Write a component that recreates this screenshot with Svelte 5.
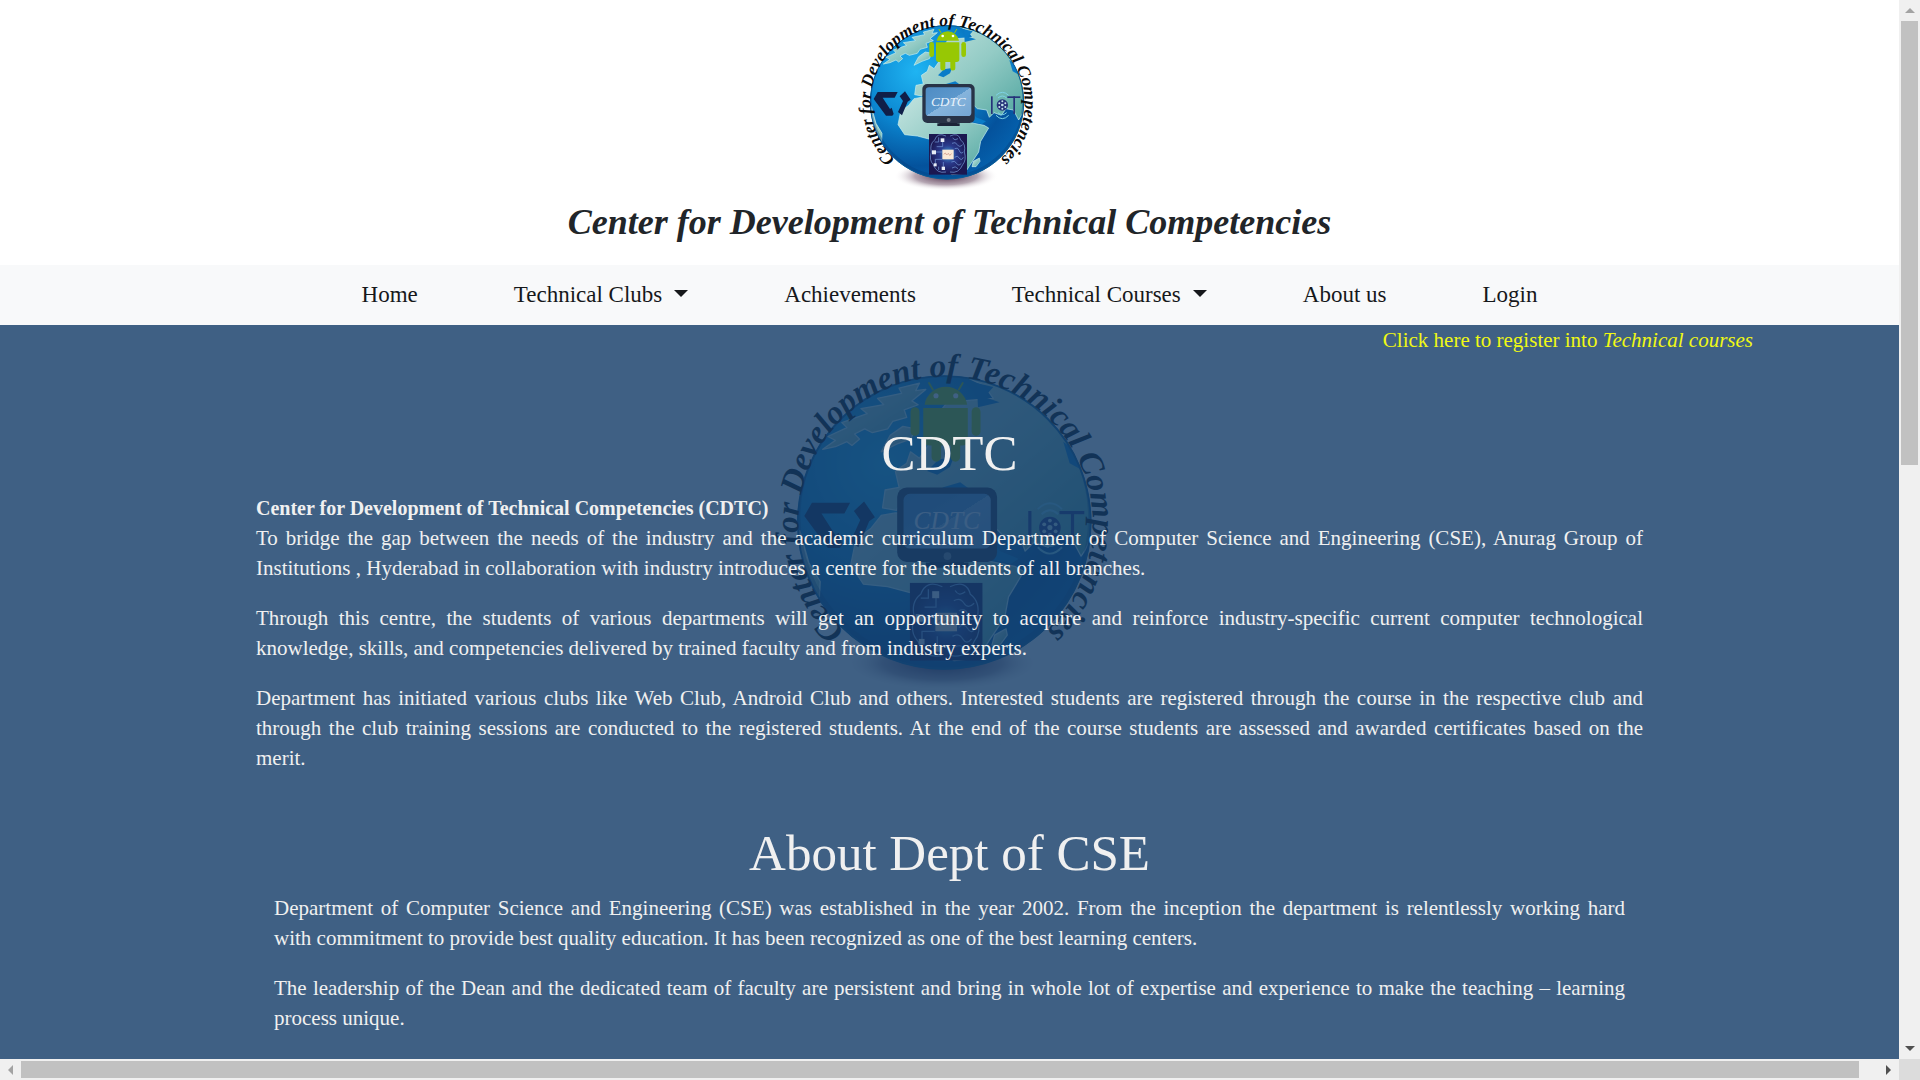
<script>
  const navItems = [
    { label: 'Home' },
    { label: 'Technical Clubs', menu: true },
    { label: 'Achievements' },
    { label: 'Technical Courses', menu: true },
    { label: 'About us' },
    { label: 'Login' }
  ];
</script>

{#snippet emblem(id)}
  <svg class="emblem" viewBox="0 0 660 600" role="img" aria-label="Center for Development of Technical Competencies emblem">
    <defs>
      <radialGradient id="{id}-sea" cx="0.3" cy="0.3" r="0.85">
        <stop offset="0" stop-color="#1fb4f2" />
        <stop offset="0.4" stop-color="#0b86d0" />
        <stop offset="0.72" stop-color="#04529c" />
        <stop offset="1" stop-color="#0567b4" />
      </radialGradient>
      <linearGradient id="{id}-land" x1="0" y1="0" x2="1" y2="1">
        <stop offset="0" stop-color="#c4e4e0" />
        <stop offset="0.5" stop-color="#93cbc5" />
        <stop offset="1" stop-color="#4fa59f" />
      </linearGradient>
      <radialGradient id="{id}-shadow">
        <stop offset="0" stop-color="#3a1030" stop-opacity="0.9" />
        <stop offset="0.6" stop-color="#5a3a55" stop-opacity="0.45" />
        <stop offset="1" stop-color="#ffffff" stop-opacity="0" />
      </radialGradient>
      <linearGradient id="{id}-screen" x1="0" y1="0" x2="1" y2="1">
        <stop offset="0" stop-color="#4f8cc4" />
        <stop offset="0.5" stop-color="#5c98cc" />
        <stop offset="0.5" stop-color="#86b4dc" />
        <stop offset="1" stop-color="#74a6d3" />
      </linearGradient>
      <radialGradient id="{id}-chip">
        <stop offset="0" stop-color="#3ca0d8" />
        <stop offset="0.45" stop-color="#2a3a8c" />
        <stop offset="1" stop-color="#1b1750" />
      </radialGradient>
      <clipPath id="{id}-globe"><circle cx="321" cy="307" r="230" /></clipPath>
      <path id="{id}-ring" d="M207.5 509 A231 231 0 1 1 438.5 509" />
    </defs>
    <ellipse cx="318" cy="528" rx="156" ry="44" fill="url(#{id}-shadow)" />
    <circle cx="321" cy="307" r="231" fill="url(#{id}-sea)" />
    <g clip-path="url(#{id}-globe)">
      <g fill="url(#{id}-land)" stroke="#c9f0f2" stroke-width="2" stroke-linejoin="round">
        <path d="M130 192 L150 178 L138 172 L168 158 L160 150 L200 136 L190 128 L226 122 L216 112 L254 104 L250 96 L282 88 L276 100 L292 98 L270 116 L280 122 L258 130 L262 142 L240 148 L232 160 L208 166 L196 160 L180 168 L188 176 L176 186 L168 180 L150 188 Z" />
        <path d="M222 196 L236 170 L256 156 L276 160 L268 176 L246 184 Z" />
        <path d="M350 76 Q478 84 550 240 Q562 330 536 360 L520 330 L498 326 L484 346 L462 338 L448 352 L440 330 L412 326 L404 318 L378 312 L360 286 L340 292 L318 284 L300 290 L280 262 L254 270 L246 288 L224 284 L228 256 L250 252 L244 226 L262 214 L268 196 L282 206 L296 186 L306 160 L300 150 L326 118 L398 112 L384 92 Z" />
        <path d="M244 292 L290 294 L318 306 L356 310 L382 322 L392 368 L432 376 L446 384 L422 424 L416 456 L392 492 L374 520 L336 524 L306 502 L290 462 L278 420 L232 408 L194 404 L174 374 L182 334 L206 316 L222 296 Z" />
        <path d="M396 500 L400 484 L418 474 L420 484 L408 500 Z" />
        <path d="M94 320 L108 370 L126 400 L124 440 L140 470 L110 420 L92 360 Z" />
      </g>
      <g fill="#0a7cc8">
        <path d="M294 226 L312 208 L336 204 L330 220 L310 232 Z" />
        <path d="M372 88 L398 94 L384 110 L408 118 L374 126 Z" />
        <path d="M318 252 L346 244 L360 254 L328 262 Z" />
        <path d="M394 330 L408 352 L438 364 L426 372 L400 366 Z" />
        <path d="M508 180 L528 196 L540 226 L518 214 Z" />
      </g>
      <circle cx="321" cy="300" r="236" fill="none" stroke="#053b78" stroke-opacity="0.35" stroke-width="20" />
    </g>
    <circle cx="321" cy="307" r="230" fill="none" stroke="#0a5c96" stroke-width="3" />

    <g fill="#97c804">
      <path d="M290 122 A34 34 0 0 1 357 122 Z" />
      <path d="M303 98 L297 88 M344 98 L350 88" stroke="#97c804" stroke-width="3" stroke-linecap="round" />
      <path d="M288 127 H358 V178 Q358 186 350 186 H346 V204 A7 7 0 0 1 331 204 V186 H316 V204 A7 7 0 0 1 301 204 V186 H297 Q288 186 288 178 Z" />
      <rect x="268" y="126" width="14" height="45" rx="7" />
      <rect x="364" y="126" width="14" height="45" rx="7" />
    </g>
    <circle cx="308" cy="108" r="4" fill="#fff" />
    <circle cx="339" cy="108" r="4" fill="#fff" />

    <g fill="#101f48">
      <path d="M113 276 H173 L164 293 H128 L150 327 L155 323 L161 342 L157 347 H138 L101 297 Z" />
      <path d="M195 274 L212 299 L203 305 L186 346 L174 336 L189 303 L179 289 Z" />
    </g>

    <path d="M298 362 H352 V370 H359 V378 H292 V370 H298 Z" fill="#1b2438" />
    <rect x="247" y="252" width="157" height="117" rx="15" fill="#283347" />
    <rect x="257" y="262" width="137" height="86" rx="10" fill="url(#{id}-screen)" />
    <circle cx="326" cy="360" r="6" fill="#77808c" />
    <text class="screen-text" x="325" y="318" text-anchor="middle">CDTC</text>

    <g fill="none" stroke="#7ed3e6" stroke-width="3">
      <path d="M468 286 Q487 268 506 286" />
      <path d="M474 294 Q487 282 500 294" />
      <path d="M468 346 Q487 366 506 346" />
      <path d="M474 338 Q487 350 500 338" />
    </g>
    <g fill="#26337a">
      <rect x="453" y="289" width="5" height="53" />
      <rect x="502" y="289" width="39" height="5" />
      <rect x="520" y="289" width="5" height="53" />
      <circle cx="487" cy="315" r="17" />
    </g>
    <g fill="#c4e4ea">
      <circle cx="487" cy="315" r="4" />
      <circle cx="478" cy="310" r="3" /><circle cx="487" cy="304" r="3" /><circle cx="496" cy="310" r="3" />
      <circle cx="478" cy="321" r="3" /><circle cx="487" cy="326" r="3" /><circle cx="496" cy="321" r="3" />
    </g>

    <rect x="267" y="402" width="114" height="122" fill="url(#{id}-chip)" />
    <g fill="none" stroke="#7aa2e0" stroke-width="2">
      <path d="M318 408 Q292 396 284 420 Q268 432 274 456 Q266 480 280 494 Q290 522 318 516" />
      <path d="M330 408 Q356 396 362 420 Q378 432 373 456 Q380 480 368 494 Q356 522 330 516" />
      <path d="M338 414 Q344 424 354 416 M336 430 Q346 424 352 434 T368 434 M344 446 Q354 440 358 452 T370 456 M344 472 Q352 464 358 474 T370 472 M334 486 Q344 480 350 490 T364 490 M336 504 Q346 496 354 506" />
      <path d="M308 424 V440 H290 M284 456 H306 M286 494 V478 H306 M310 504 V486 M296 412 V426 H284 M296 510 V500" />
    </g>
    <g fill="#e8edf6">
      <rect x="302" y="415" width="11" height="11" />
      <rect x="276" y="451" width="12" height="12" />
      <rect x="281" y="490" width="9" height="9" />
      <rect x="305" y="500" width="10" height="10" />
      <rect x="307" y="449" width="34" height="29" fill="#fbe9d6" />
    </g>
    <path d="M311 463 l5 -4 l4 6 l5 -5 l4 6 l6 -5" fill="none" stroke="#c78a78" stroke-width="2" />

    <text class="ring-text" text-anchor="middle">
      <textPath href="#{id}-ring" startOffset="50%">Center for Development of Technical Competencies</textPath>
    </text>
  </svg>
{/snippet}

<div class="window">
  <div class="page">
    <header class="masthead">
      <div class="logo">{@render emblem('logo')}</div>
      <h1>Center for Development of Technical Competencies</h1>
    </header>

    <nav class="menu" aria-label="Main">
      {#each navItems as item}
        {#if item.menu}
          <button type="button" class="item" aria-haspopup="true">{item.label}<span class="caret"></span></button>
        {:else}
          <a class="item" href="#{item.label.toLowerCase().replace(' ', '-')}">{item.label}</a>
        {/if}
      {/each}
    </nav>

    <main class="content">
      <div class="backdrop" aria-hidden="true">{@render emblem('backdrop')}</div>
      <p class="register"><a href="#register">Click here to register into <em>Technical courses</em></a></p>

      <section class="intro">
        <h2>CDTC</h2>
        <p>
          <strong>Center for Development of Technical Competencies (CDTC)</strong><br />
          To bridge the gap between the needs of the industry and the academic curriculum Department of Computer Science and Engineering (CSE), Anurag Group of Institutions , Hyderabad in collaboration with industry introduces a centre for the students of all branches.
        </p>
        <p>
          Through this centre, the students of various departments will get an opportunity to acquire and reinforce industry-specific current computer technological knowledge, skills, and competencies delivered by trained faculty and from industry experts.
        </p>
        <p>
          <span class="filled">Department has initiated various clubs like Web Club, Android Club and others. Interested students are registered through the course in the respective club and through the club training sessions are conducted to the registered students. At the end of the course students are assessed and awarded certificates based on the</span>
          merit.
        </p>
      </section>

      <section class="about">
        <h2>About Dept of CSE</h2>
        <div class="about-text">
          <p>
            Department of Computer Science and Engineering (CSE) was established in the year 2002. From the inception the department is relentlessly working hard with&nbsp;commitment to provide best quality education. It has been recognized as one of the best learning centers.
          </p>
          <p>
            The leadership of the Dean and the dedicated team of faculty are persistent and bring in whole lot of expertise and experience to make the teaching – learning process unique.
          </p>
        </div>
      </section>
    </main>
  </div>

  <div class="bar vertical" aria-hidden="true">
    <span class="cap"><i class="arrow up"></i></span>
    <span class="track"><span class="thumb"></span></span>
    <span class="cap"><i class="arrow down"></i></span>
  </div>
  <div class="bar horizontal" aria-hidden="true">
    <span class="cap"><i class="arrow left"></i></span>
    <span class="track"><span class="thumb"></span></span>
    <span class="cap"><i class="arrow right"></i></span>
  </div>
  <div class="corner"></div>
</div>

<style>
  :global(body) {
    margin: 0;
    background: #fff;
  }
  .window {
    display: grid;
    grid-template-columns: minmax(0, 1fr) 21px;
    grid-template-rows: minmax(0, 1fr) 21px;
    height: 100vh;
    font-family: 'Liberation Serif', serif;
    font-size: 21px;
    line-height: 30px;
    color: #212529;
  }
  .page {
    display: flex;
    flex-direction: column;
    overflow: hidden;
  }
  h1, h2, p {
    margin: 0;
  }
  .masthead {
    flex: none;
    display: flex;
    flex-direction: column;
    align-items: center;
    padding-bottom: 20px;
  }
  .logo {
    width: 220px;
    height: 200px;
  }
  .emblem {
    display: block;
    width: 100%;
    height: 100%;
  }
  .ring-text {
    font: italic bold 52px 'Liberation Serif', serif;
    fill: #0a0a0a;
  }
  .screen-text {
    font: italic 40px 'Liberation Serif', serif;
    fill: #e8f2fb;
  }
  h1 {
    font-size: 36px;
    line-height: 45px;
    font-style: italic;
    font-weight: bold;
    text-align: center;
  }
  .menu {
    flex: none;
    display: flex;
    justify-content: center;
    align-items: center;
    gap: 96px;
    height: 60px;
    background: #f8f9fa;
  }
  .item {
    display: flex;
    align-items: center;
    gap: 12px;
    padding: 0;
    border: 0;
    background: none;
    font: inherit;
    font-size: 23px;
    color: #16181b;
    text-decoration: none;
    white-space: nowrap;
  }
  .caret {
    border: 7px solid transparent;
    border-top-color: #16181b;
    border-bottom: 0;
    margin-bottom: 4px;
  }
  .content {
    flex: 1 0 auto;
    position: relative;
    isolation: isolate;
    background: #3f6084;
    color: #f0f0f0;
  }
  .backdrop {
    position: absolute;
    inset: 0;
    z-index: -1;
    display: flex;
    justify-content: center;
    align-items: flex-start;
    background: #fff;
  }
  .backdrop .emblem {
    width: 420px;
    height: 382px;
    margin-top: 2px;
  }
  .backdrop::after {
    content: '';
    position: absolute;
    inset: 0;
    background: rgba(21, 61, 105, 0.82);
  }
  .register {
    padding-right: 146px;
    text-align: right;
  }
  .register a {
    color: #f0f814;
    text-decoration: none;
  }
  section {
    padding: 0 256px;
  }
  .intro {
    padding-top: 68px;
  }
  .about {
    padding-top: 30px;
  }
  .about-text {
    padding: 0 18px;
  }
  h2 {
    margin-bottom: 10px;
    font-size: 51px;
    line-height: 60px;
    font-weight: normal;
    text-align: center;
  }
  section p {
    margin-bottom: 20px;
    text-align: justify;
  }
  .filled {
    display: block;
    text-align-last: justify;
  }
  strong {
    font-size: 20px;
  }
  .bar {
    display: flex;
    background: #f0f0f0;
  }
  .vertical {
    flex-direction: column;
  }
  .cap {
    flex: none;
    display: flex;
    align-items: center;
    justify-content: center;
    width: 21px;
    height: 21px;
  }
  .track {
    flex: 1;
    display: flex;
  }
  .vertical .track {
    flex-direction: column;
    padding: 0 2px;
  }
  .horizontal .track {
    padding: 2px 0;
  }
  .thumb {
    background: #c1c1c1;
  }
  .vertical .thumb {
    height: 43.7%;
  }
  .horizontal .thumb {
    width: 99%;
  }
  .arrow {
    border: 5px solid transparent;
  }
  .up {
    border-top: 0;
    border-bottom-color: #a3a3a3;
  }
  .down {
    border-bottom: 0;
    border-top-color: #505050;
  }
  .left {
    border-left: 0;
    border-right-color: #a3a3a3;
  }
  .right {
    border-right: 0;
    border-left-color: #505050;
  }
  .corner {
    background: #dcdcdc;
  }
</style>
